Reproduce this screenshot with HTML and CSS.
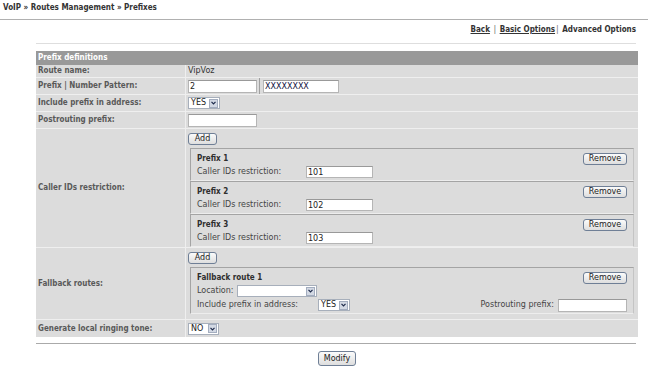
FILE: index.html
```html
<!DOCTYPE html>
<html lang="en">
<head>
    <meta charset="UTF-8">
    <title>Prefixes</title>
    <link rel="stylesheet" href="styles.css">
</head>
<body>
    <div class="crumb">VoIP » Routes Management » Prefixes</div>

    <div class="page">
        <div class="nav">
            <a href="#">Back</a> <span class="sep">|</span> <a href="#">Basic Options</a><span class="sep">|</span> <b>Advanced Options</b>
        </div>

        <div class="form">
            <div class="head">Prefix definitions</div>

            <div class="label">Route name:</div>
            <div class="value">VipVoz</div>

            <div class="label">Prefix | Number Pattern:</div>
            <div class="value">
                <input class="field" type="text" value="2">
                <span class="divider"></span>
                <input class="field pattern" type="text" value="XXXXXXXX">
            </div>

            <div class="label">Include prefix in address:</div>
            <div class="value">
                <span class="select"><span>YES</span><span class="arrow"><svg width="5" height="4" viewBox="0 0 5 4"><path d="M0.5 0.8 2.5 2.8 4.5 0.8" fill="none" stroke="#1d2a4a" stroke-width="1.2"/></svg></span></span>
            </div>

            <div class="label">Postrouting prefix:</div>
            <div class="value">
                <input class="field" type="text" value="">
            </div>

            <div class="label">Caller IDs restriction:</div>
            <div class="value stack">
                <button class="btn add">Add</button>
                <div class="group">
                    <div class="box">
                        <div class="box-head"><b>Prefix 1</b><button class="btn remove">Remove</button></div>
                        <div class="box-row"><span class="box-label">Caller IDs restriction:</span><input class="field short" type="text" value="101"></div>
                    </div>
                    <div class="box">
                        <div class="box-head"><b>Prefix 2</b><button class="btn remove">Remove</button></div>
                        <div class="box-row"><span class="box-label">Caller IDs restriction:</span><input class="field short" type="text" value="102"></div>
                    </div>
                    <div class="box">
                        <div class="box-head"><b>Prefix 3</b><button class="btn remove">Remove</button></div>
                        <div class="box-row"><span class="box-label">Caller IDs restriction:</span><input class="field short" type="text" value="103"></div>
                    </div>
                </div>
            </div>

            <div class="label">Fallback routes:</div>
            <div class="value stack">
                <button class="btn add">Add</button>
                <div class="group">
                    <div class="box fallback">
                        <div class="box-head"><b>Fallback route 1</b><button class="btn remove">Remove</button></div>
                        <div class="box-row">
                            <span class="loc-label">Location:</span>
                            <span class="select wide"><span></span><span class="arrow"><svg width="5" height="4" viewBox="0 0 5 4"><path d="M0.5 0.8 2.5 2.8 4.5 0.8" fill="none" stroke="#1d2a4a" stroke-width="1.2"/></svg></span></span>
                        </div>
                        <div class="box-row">
                            <span class="inc-label">Include prefix in address:</span>
                            <span class="select"><span>YES</span><span class="arrow"><svg width="5" height="4" viewBox="0 0 5 4"><path d="M0.5 0.8 2.5 2.8 4.5 0.8" fill="none" stroke="#1d2a4a" stroke-width="1.2"/></svg></span></span>
                            <span class="post-label">Postrouting prefix:</span>
                            <input class="field" type="text" value="">
                        </div>
                    </div>
                </div>
            </div>

            <div class="label">Generate local ringing tone:</div>
            <div class="value">
                <span class="select narrow"><span>NO</span><span class="arrow"><svg width="5" height="4" viewBox="0 0 5 4"><path d="M0.5 0.8 2.5 2.8 4.5 0.8" fill="none" stroke="#1d2a4a" stroke-width="1.2"/></svg></span></span>
            </div>
        </div>

        <div class="rule"></div>
        <div class="actions">
            <button class="btn modify">Modify</button>
        </div>
    </div>
</body>
</html>
```

FILE: styles.css
```css
:root {
    --row-color: #dcdcdc;
    --head-color: #999999;
    --line-color: #efefef;
    --label-color: #595959;
    --text-color: #333333;
}

body {
    margin: 0;
    background: #fff;
    color: var(--text-color);
    font-family: "DejaVu Sans", Verdana, sans-serif;
    font-size: 8px;
    line-height: 10px;
}

b, .crumb, .nav, .head, .label {
    font-family: "DejaVu Sans Condensed", "DejaVu Sans", sans-serif;
    font-weight: bold;
}

.crumb {
    height: 16px;
    padding: 3px 3px 0;
    border-bottom: 1px solid #b0b0b0;
    color: #333;
}

.page {
    margin: 0 10px 0 36px;
}

.nav {
    text-align: right;
    padding: 5px 0 8px;
    margin-right: 2px;
    border-bottom: 1px solid #dedede;
}

.nav a {
    color: #333;
}

.nav .sep {
    font-family: "DejaVu Sans", sans-serif;
    font-weight: normal;
    color: #777;
    margin: 0 1px;
}

/* form grid: gaps draw the light row lines */
.form {
    margin-top: 7px;
    display: grid;
    grid-template-columns: 149px 1fr;
    grid-template-rows: 13px 12px 16px 16px 16px 118px 71px 17px;
    gap: 1px;
    background: var(--line-color);
}

.head {
    grid-column: 1 / 3;
    background: var(--head-color);
    color: #fff;
    padding-left: 2px;
    display: flex;
    align-items: center;
    margin-bottom: -1px;
}

.label {
    background: var(--row-color);
    color: var(--label-color);
    display: flex;
    align-items: center;
    padding-left: 2px;
}

.value {
    background: var(--row-color);
    display: flex;
    align-items: center;
    padding-left: 2px;
}

.value.stack {
    display: block;
    padding: 4px 4px 0 2px;
}

.field {
    box-sizing: border-box;
    width: 69px;
    height: 13px;
    border: 1px solid #b5b5b5;
    border-top-color: #999;
    background: #fff;
    padding: 0 1px;
    font-family: "DejaVu Sans", sans-serif;
    font-size: 8px;
    color: #222;
}

.field.pattern {
    width: 76px;
    color: #101040;
}

.field.short {
    width: 67px;
    height: 12px;
}

.divider {
    width: 1px;
    height: 16px;
    background: #a0a0a0;
    margin: 0 3px 0 2px;
}

.select {
    box-sizing: border-box;
    display: inline-flex;
    align-items: center;
    justify-content: space-between;
    width: 32px;
    height: 12px;
    border: 1px solid #a7afbb;
    background: #fff;
    padding: 0 1px 0 2px;
    color: #222;
}

.select.wide {
    width: 80px;
}

.select.narrow {
    width: 31px;
}

.arrow {
    box-sizing: border-box;
    width: 9px;
    height: 9px;
    border: 1px solid #a3adbf;
    background: #d3d9e4;
    display: flex;
    align-items: center;
    justify-content: center;
}

.btn {
    box-sizing: border-box;
    height: 12px;
    padding: 0;
    border: 1px solid #6f7f96;
    border-radius: 3px;
    background: linear-gradient(#fbfbfb, #dedede);
    font-family: "DejaVu Sans", sans-serif;
    font-size: 8px;
    line-height: 10px;
    color: #222;
}

.btn.add {
    display: block;
    width: 29px;
    margin-bottom: 3px;
}

.btn.remove {
    width: 44px;
}

.btn.modify {
    width: 38px;
    height: 15px;
}

.group {
    margin-left: 2px;
}

.box {
    height: 33px;
    box-sizing: border-box;
    border: 1px solid #a4a4a4;
    border-right-color: #c4c4c4;
    border-bottom-color: #ededed;
    padding: 3px 6px 1px 6px;
}

.box.fallback {
    height: 47px;
}

.box-head {
    height: 13px;
    display: flex;
    align-items: center;
    justify-content: space-between;
}

.box-head b {
    color: #2e2e2e;
}

.box-row {
    height: 14px;
    display: flex;
    align-items: center;
    color: #444;
}

.box-label {
    width: 109px;
}

.loc-label {
    width: 40px;
}

.inc-label {
    width: 121px;
}

.post-label {
    margin-left: auto;
    margin-right: 4px;
}

.rule {
    margin: 6px 2px 0 0;
    border-top: 1px solid #aaa;
}

.actions {
    margin-top: 7px;
    display: flex;
    justify-content: center;
}
```
